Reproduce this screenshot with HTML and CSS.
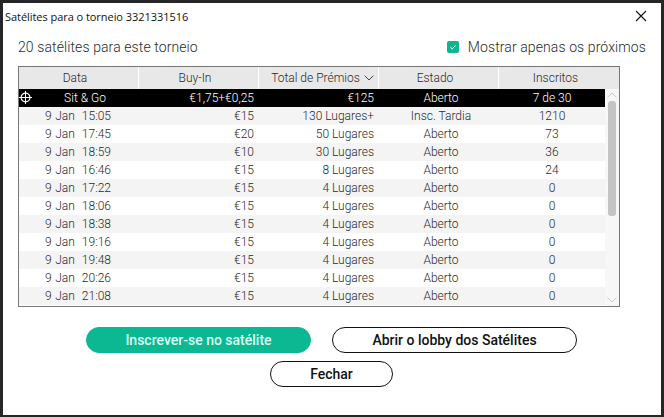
FILE: index.html
```html
<!DOCTYPE html>
<html lang="pt">
<head>
    <meta charset="UTF-8">
    <title>Satélites para o torneio 3321331516</title>
    <link rel="stylesheet" href="styles.css">
</head>
<body>
    <div class="janela">
        <header class="barra">
            <span class="barra-titulo">Satélites para o torneio 3321331516</span>
            <svg class="fechar-x" width="12" height="12" viewBox="0 0 12 12"><path d="M1 1l10 10M11 1L1 11" stroke="#111" stroke-width="1.1" fill="none"/></svg>
        </header>

        <div class="topo">
            <span>20 satélites para este torneio</span>
            <label class="filtro">
                <svg class="check" width="12" height="12" viewBox="0 0 12 12"><rect width="12" height="12" rx="2" fill="#0fb58f"/><path d="M3.4 6.2l1.8 1.7 3.4-3.4" stroke="#fff" stroke-width="1" fill="none"/></svg>
                Mostrar apenas os próximos
            </label>
        </div>

        <div class="tabela">
            <div class="cabecalho">
                <div>Data</div>
                <div>Buy-In</div>
                <div class="ordenada">Total de Prémios<svg width="10" height="6" viewBox="0 0 10 6"><path d="M.7.7L5 5l4.3-4.3" stroke="#444" stroke-width="1" fill="none"/></svg></div>
                <div>Estado</div>
                <div>Inscritos</div>
            </div>
            <div class="corpo">
                <div class="linhas">
                    <div class="linha ativa">
                        <div class="data"><svg class="alvo" width="13" height="13" viewBox="0 0 13 13"><g stroke="#fff" fill="none"><circle cx="6.5" cy="6.5" r="4.4" stroke-width="1.2"/><path d="M6.5 0v13M0 6.5h13"/></g></svg>Sit &amp; Go</div>
                        <div class="valor">€1,75+€0,25</div><div class="valor">€125</div><div class="estado">Aberto</div><div>7 de 30</div>
                    </div>
                    <div class="linha"><div class="data">9 Jan  15:05</div><div class="valor">€15</div><div class="valor">130 Lugares+</div><div class="estado">Insc. Tardia</div><div>1210</div></div>
                    <div class="linha"><div class="data">9 Jan  17:45</div><div class="valor">€20</div><div class="valor">50 Lugares</div><div class="estado">Aberto</div><div>73</div></div>
                    <div class="linha"><div class="data">9 Jan  18:59</div><div class="valor">€10</div><div class="valor">30 Lugares</div><div class="estado">Aberto</div><div>36</div></div>
                    <div class="linha"><div class="data">9 Jan  16:46</div><div class="valor">€15</div><div class="valor">8 Lugares</div><div class="estado">Aberto</div><div>24</div></div>
                    <div class="linha"><div class="data">9 Jan  17:22</div><div class="valor">€15</div><div class="valor">4 Lugares</div><div class="estado">Aberto</div><div>0</div></div>
                    <div class="linha"><div class="data">9 Jan  18:06</div><div class="valor">€15</div><div class="valor">4 Lugares</div><div class="estado">Aberto</div><div>0</div></div>
                    <div class="linha"><div class="data">9 Jan  18:38</div><div class="valor">€15</div><div class="valor">4 Lugares</div><div class="estado">Aberto</div><div>0</div></div>
                    <div class="linha"><div class="data">9 Jan  19:16</div><div class="valor">€15</div><div class="valor">4 Lugares</div><div class="estado">Aberto</div><div>0</div></div>
                    <div class="linha"><div class="data">9 Jan  19:48</div><div class="valor">€15</div><div class="valor">4 Lugares</div><div class="estado">Aberto</div><div>0</div></div>
                    <div class="linha"><div class="data">9 Jan  20:26</div><div class="valor">€15</div><div class="valor">4 Lugares</div><div class="estado">Aberto</div><div>0</div></div>
                    <div class="linha"><div class="data">9 Jan  21:08</div><div class="valor">€15</div><div class="valor">4 Lugares</div><div class="estado">Aberto</div><div>0</div></div>
                </div>
                <div class="rolagem">
                    <svg width="10" height="6" viewBox="0 0 10 6"><path d="M.5 5.5L5 1l4.5 4.5" stroke="#ccc" fill="none"/></svg>
                    <div class="polegar"></div>
                    <svg width="10" height="6" viewBox="0 0 10 6"><path d="M.5.5L5 5 9.5.5" stroke="#ccc" fill="none"/></svg>
                </div>
            </div>
        </div>

        <div class="botoes">
            <div class="botoes-linha">
                <button class="btn verde">Inscrever-se no satélite</button>
                <button class="btn">Abrir o lobby dos Satélites</button>
            </div>
            <button class="btn fechar">Fechar</button>
        </div>
    </div>
</body>
</html>
```

FILE: styles.css
```css
html, body {
    height: 100%;
}
body {
    margin: 0;
    padding: 3px;
    box-sizing: border-box;
    background-color: #262626;
    font-family: Roboto, sans-serif;
    overflow: hidden;
}
.janela {
    height: 412px;
    width: 658px;
    background-color: white;
    color: #333;
}
.barra {
    height: 24px;
    display: flex;
    justify-content: space-between;
    align-items: center;
    padding: 1px 14px 0 2px;
}
.barra-titulo {
    font-family: "Open Sans", sans-serif;
    font-size: 11px;
    letter-spacing: -0.05px;
    color: #111;
}
.topo {
    display: flex;
    justify-content: space-between;
    align-items: center;
    height: 22px;
    margin: 8px 15px 0;
    font-size: 14px;
    font-weight: 300;
    letter-spacing: 0.1px;
    color: #2a2a2a;
}
.filtro {
    display: flex;
    align-items: center;
    gap: 9px;
}
.check {
    display: block;
}
.tabela {
    width: 600px;
    height: 239px;
    margin: 8px 0 0 15px;
    border: 1px solid #777;
    font-size: 12px;
    font-weight: 300;
    color: #2a2a2a;
}
.cabecalho {
    display: grid;
    grid-template-columns: 120px 120px 120px 120px 120px;
    height: 22px;
    background-color: #e8e8e8;
}
.cabecalho > div {
    display: flex;
    align-items: center;
    justify-content: center;
    gap: 4px;
    padding-right: 7px;
    border-right: 1px solid white;
}
.cabecalho > .ordenada {
    padding-left: 8px;
    padding-right: 0;
}
.cabecalho > div:last-child {
    border-right: 0;
}
.corpo {
    display: flex;
}
.linhas {
    width: 586px;
}
.linha {
    display: grid;
    grid-template-columns: 120px 120px 120px 120px 106px;
    height: 18px;
    line-height: 18px;
    text-align: center;
    white-space: pre;
}
.linha:nth-child(even) {
    background-color: #f4f4f4;
}
.linha.ativa {
    background-color: black;
    color: white;
}
.linha .data {
    position: relative;
    word-spacing: 0.6px;
    padding-right: 2px;
}
.linha.ativa .data {
    padding-right: 0;
    padding-left: 12px;
    word-spacing: 0;
}
.linha .valor {
    text-align: right;
    padding-right: 5px;
}
.linha .estado {
    padding-left: 4px;
}
.alvo {
    position: absolute;
    left: 0;
    top: 2px;
}
.rolagem {
    width: 14px;
    height: 217px;
    display: flex;
    flex-direction: column;
    align-items: center;
    background-color: #f7f7f7;
    padding-top: 3px;
    box-sizing: border-box;
}
.polegar {
    width: 8px;
    height: 115px;
    margin-top: 3px;
    background-color: #c4c4c4;
    border-radius: 3px;
    margin-bottom: auto;
}
.rolagem svg:last-child {
    margin-bottom: 3px;
}
.botoes {
    display: flex;
    flex-direction: column;
    align-items: center;
    gap: 8px;
    margin-top: 20px;
    padding-right: 1px;
}
.botoes-linha {
    display: flex;
    gap: 21px;
}
.btn {
    width: 245px;
    height: 26px;
    box-sizing: border-box;
    border: 1px solid #111;
    border-radius: 13px;
    background-color: white;
    color: #111;
    font-family: Roboto, sans-serif;
    font-size: 14px;
    font-weight: 500;
    padding: 0;
}
.btn.verde {
    width: 225px;
    background-color: #0cb892;
    border-color: #0cb892;
    color: #d9fff4;
}
.btn.fechar {
    width: 123px;
}
```
